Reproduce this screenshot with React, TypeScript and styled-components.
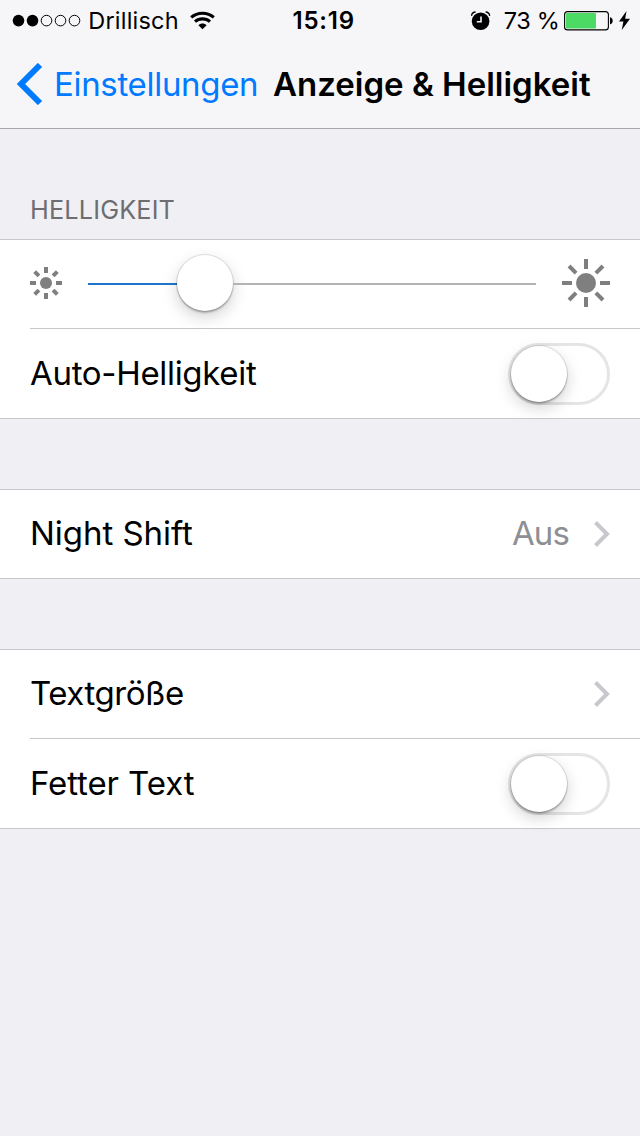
import React from 'react';
import styled, { createGlobalStyle } from 'styled-components';

const GlobalStyle = createGlobalStyle`
  * { box-sizing: border-box; }
  body {
    margin: 0;
    background: #efeff4;
    font-family: Inter, 'Liberation Sans', sans-serif;
    color: #000;
  }
  svg { display: block; flex: none; }
`;

const Screen = styled.div`
  width: 640px;
  min-height: 1136px;
  background: #efeff4;
`;

const Header = styled.header`
  height: 129px;
  background: #f6f6f8;
  border-bottom: 1px solid #a7a7aa;
`;

const StatusBar = styled.div`
  display: grid;
  grid-template-columns: 292px 1fr auto;
  align-items: center;
  height: 40px;
  padding: 1px 10px 0 0;
`;

const StatusSide = styled.div`
  display: flex;
  align-items: center;
  height: 39px;
  padding-left: 12px;
`;

const StatusText = styled.span<{ $width: number; $indent: number; $bold?: boolean; $spacing?: number }>`
  width: ${(p) => p.$width}px;
  padding-left: ${(p) => p.$indent}px;
  font-size: ${(p) => (p.$bold ? 24 : 23.5)}px;
  line-height: 38px;
  font-weight: ${(p) => (p.$bold ? 600 : 400)};
  letter-spacing: ${(p) => p.$spacing ?? 0}px;
  white-space: nowrap;
`;

const NavBar = styled.nav`
  display: flex;
  align-items: center;
  height: 88px;
  padding-left: 16px;
`;

const BackLabel = styled.span`
  width: 220px;
  padding-left: 11px;
  font-size: 33px;
  letter-spacing: -0.32px;
  color: #007aff;
  white-space: nowrap;
`;

const Title = styled.h1`
  margin: 0;
  padding-left: 10px;
  font-size: 33px;
  font-weight: 600;
  white-space: nowrap;
`;

const SectionLabel = styled.h2`
  margin: 0;
  height: 110px;
  padding: 65px 0 0 30px;
  font-size: 25.3px;
  line-height: 31px;
  letter-spacing: 0.15px;
  font-weight: 400;
  color: #6d6d72;
`;

const Group = styled.section`
  background: #fff;
  border: solid #c8c7cc;
  border-width: 1px 0;
  margin-bottom: 70px;
`;

const Row = styled.div<{ $divided?: boolean; $raised?: boolean }>`
  display: flex;
  align-items: center;
  height: ${(p) => (p.$divided ? 90 : 88)}px;
  margin-left: 30px;
  padding-right: 30px;
  padding-bottom: ${(p) => (p.$raised ? 2 : 0)}px;
  border-top: ${(p) => (p.$divided ? '1px solid #c8c7cc' : '0')};
`;

const RowLabel = styled.span<{ $spacing: number }>`
  flex: 1;
  padding-bottom: 2px;
  font-size: 33px;
  line-height: 40px;
  letter-spacing: ${(p) => p.$spacing}px;
`;

const RowValue = styled.span`
  margin-right: 25px;
  padding-bottom: 2px;
  font-size: 33px;
  line-height: 40px;
  letter-spacing: -0.9px;
  color: #8e8e93;
`;

const Knob = styled.span`
  display: block;
  width: 56px;
  height: 56px;
  border-radius: 50%;
  background: #fff;
  box-shadow: 0 0 0 1px rgba(0, 0, 0, 0.1), 0 2px 2px rgba(0, 0, 0, 0.24),
    0 6px 16px rgba(0, 0, 0, 0.18);
`;

const Track = styled.div`
  display: flex;
  align-items: center;
  width: 448px;
  margin: 0 26px;
`;

const TrackPart = styled.span<{ $filled?: boolean }>`
  height: 2px;
  margin-top: 2px;
  width: ${(p) => (p.$filled ? '89px' : 'auto')};
  flex: ${(p) => (p.$filled ? 'none' : '1')};
  background: ${(p) => (p.$filled ? '#1f75cb' : '#b4b4b4')};
`;

const Switch = styled.div`
  width: 102px;
  height: 62px;
  border: 3px solid #e5e5e5;
  border-radius: 31px;
`;

function Sun({ size, disc, inner }: { size: number; disc: number; inner: number }) {
  const c = size / 2;
  return (
    <svg width={size} height={size} fill="#7f7f7f" overflow="visible">
      <circle cx={c} cy={c} r={disc} />
      {[0, 45, 90, 135, 180, 225, 270, 315].map((a) => (
        <rect key={a} x={c - 2} y={0} width={4} height={c - inner} transform={`rotate(${a} ${c} ${c})`} />
      ))}
    </svg>
  );
}

const Disclosure = () => (
  <svg width="16" height="28" viewBox="0 0 16 28" fill="none" stroke="#c7c7cc" strokeWidth="4">
    <path d="M1.5 2.5 13 14 1.5 25.5" />
  </svg>
);

const Signal = () => (
  <svg width="69" height="14" viewBox="0 0 69 14">
    {[0, 1, 2, 3, 4].map((i) => (
      <circle
        key={i}
        cx={6.5 + i * 14}
        cy="6.6"
        r={i < 2 ? 5.8 : 5.3}
        fill={i < 2 ? '#000' : 'none'}
        stroke={i < 2 ? 'none' : '#000'}
      />
    ))}
  </svg>
);

const Wifi = () => (
  <svg width="25" height="20" viewBox="0 0 25 20" fill="none" stroke="#000" strokeWidth="3.1">
    <path d="M1.2 6.4C7.4 .8 17.6 .8 23.8 6.4" />
    <path d="M5 10.7C9.3 6.9 15.7 6.9 20 10.7" />
    <path d="M12.5 18.2 8.4 14.2C10.7 12 14.3 12 16.6 14.2Z" fill="#000" stroke="none" />
  </svg>
);

const Alarm = () => (
  <svg width="20" height="20" viewBox="0 0 20 20" fill="none">
    <circle cx="9.6" cy="10.3" r="8.8" fill="#000" />
    <path d="M10 5.5V10.8H5.8" stroke="#f6f6f8" strokeWidth="1.6" />
    <path d="M.5 4.8C.8 2.5 2.4 1.1 4.6 1M18.7 4.8C18.4 2.5 16.8 1.1 14.6 1" stroke="#000" strokeWidth="1.3" />
  </svg>
);

const Battery = () => (
  <svg width="49" height="20" viewBox="0 0 49 20">
    <rect x=".6" y=".6" width="43.8" height="18.3" rx="3" fill="none" stroke="#000" strokeWidth="1.1" />
    <rect x="2" y="2" width="30" height="15.5" rx="1" fill="#4cd964" />
    <path d="M46 6.2C49.6 6.6 49.6 12.9 46 13.3Z" fill="#000" />
  </svg>
);

const Bolt = () => (
  <svg width="11" height="19" viewBox="0 0 12 19" preserveAspectRatio="none">
    <path d="M8.2 0 0 10.4H4.8L3 19 12 7.8H6.7Z" fill="#000" />
  </svg>
);

const BoltSlot = styled.span`
  margin-left: 6px;
`;

const BackChevron = () => (
  <svg width="27" height="42" viewBox="0 0 27 42" fill="none" stroke="#007aff" strokeWidth="6">
    <path d="M24 2 5 21 24 40" />
  </svg>
);

const Toggle = () => (
  <Switch>
    <Knob />
  </Switch>
);

export default function App() {
  return (
    <Screen>
      <GlobalStyle />
      <Header>
        <StatusBar>
          <StatusSide>
            <Signal />
            <StatusText $width={109} $indent={7.3} $spacing={0.2}>Drillisch</StatusText>
            <Wifi />
          </StatusSide>
          <StatusText $width={80} $indent={0.5} $bold $spacing={0.8}>15:19</StatusText>
          <StatusSide>
            <Alarm />
            <StatusText $width={73} $indent={12.8} $spacing={-0.35}>73 %</StatusText>
            <Battery />
            <BoltSlot>
              <Bolt />
            </BoltSlot>
          </StatusSide>
        </StatusBar>
        <NavBar>
          <BackChevron />
          <BackLabel>Einstellungen</BackLabel>
          <Title>Anzeige &amp; Helligkeit</Title>
        </NavBar>
      </Header>
      <main>
        <SectionLabel>HELLIGKEIT</SectionLabel>
        <Group>
          <Row $raised>
            <Sun size={32} disc={6} inner={10} />
            <Track>
              <TrackPart $filled />
              <Knob />
              <TrackPart />
            </Track>
            <Sun size={48} disc={10} inner={14} />
          </Row>
          <Row $divided>
            <RowLabel $spacing={-0.31}>Auto-Helligkeit</RowLabel>
            <Toggle />
          </Row>
        </Group>
        <Group>
          <Row>
            <RowLabel $spacing={-0.05}>Night Shift</RowLabel>
            <RowValue>Aus</RowValue>
            <Disclosure />
          </Row>
        </Group>
        <Group>
          <Row>
            <RowLabel $spacing={-0.45}>Textgröße</RowLabel>
            <Disclosure />
          </Row>
          <Row $divided>
            <RowLabel $spacing={-0.1}>Fetter Text</RowLabel>
            <Toggle />
          </Row>
        </Group>
      </main>
    </Screen>
  );
}
